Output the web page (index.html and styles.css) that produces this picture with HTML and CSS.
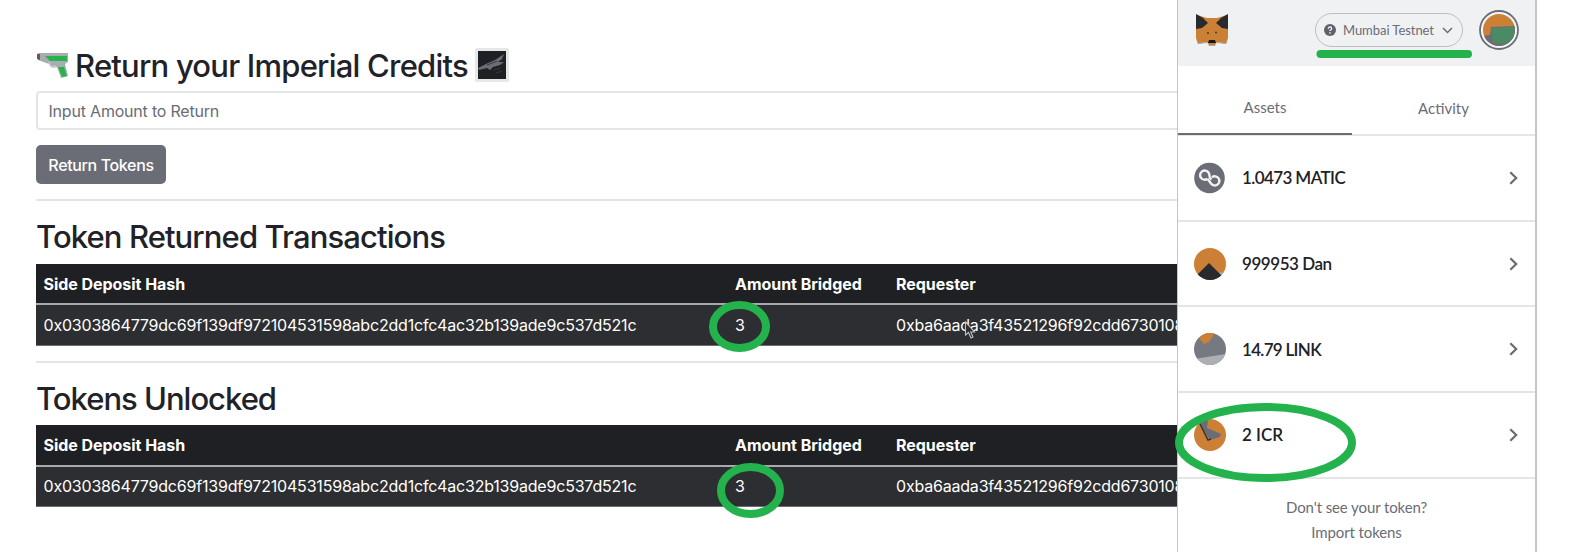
FILE: index.html
```html
<!DOCTYPE html>
<html lang="en">
<head>
<meta charset="utf-8">
<title>Imperial Credits Bridge</title>
<link rel="stylesheet" href="styles.css">
</head>
<body>
<div class="screen">
  <main class="bridge">
    <h2 class="title">
      <svg class="pistol" viewBox="0 0 33 27"><path d="M1 2 3 1H32V10L29 12 32 24 25 26 21 15Q16 17 13 12L2 8Z" fill="#a9adb1"/><path d="M9 4H31V9H14ZM22 15H28L31 24 26 25Z" fill="#27b24c"/><path d="M13 10Q14 17 20 14" fill="none" stroke="#c9ccd0" stroke-width="1.5"/><path d="M1 2H4V8L1 7Z" fill="#6b5a50"/></svg>
      <span class="title-text">Return your Imperial Credits</span>
      <svg class="ship" viewBox="0 0 34 34"><rect width="34" height="34" rx="2" fill="#e6e7e9"/><rect x="3" y="3" width="28" height="28" fill="#1f2024"/><path d="M3 20 13 15 20 12 29 6 27 11 23 14 29 14 25 17 18 19 15 22 12 20 4 22Z" fill="#6a6c76"/><path d="M19 22 25 20M12 17 22 13M21 25 27 23" stroke="#36373c" stroke-width="1"/></svg>
    </h2>
    <input class="amount" placeholder="Input Amount to Return">
    <button class="return">Return Tokens</button>
    <hr class="rule">
    <h2 class="heading returned">Token Returned Transactions</h2>
    <table class="ledger first">
      <thead><tr><th class="c-hash">Side Deposit Hash</th><th class="c-amount">Amount Bridged</th><th>Requester</th></tr></thead>
      <tbody><tr><td>0x0303864779dc69f139df972104531598abc2dd1cfc4ac32b139ade9c537d521c</td><td>3</td><td>0xba6aada3f43521296f92cdd6730108</td></tr></tbody>
    </table>
    <hr class="rule">
    <h2 class="heading unlocked">Tokens Unlocked</h2>
    <table class="ledger">
      <thead><tr><th class="c-hash">Side Deposit Hash</th><th class="c-amount">Amount Bridged</th><th>Requester</th></tr></thead>
      <tbody><tr><td>0x0303864779dc69f139df972104531598abc2dd1cfc4ac32b139ade9c537d521c</td><td>3</td><td>0xba6aada3f43521296f92cdd6730108</td></tr></tbody>
    </table>
  </main>

  <aside class="wallet">
    <header class="wallet-head">
      <svg class="fox" viewBox="0 0 34 32"><path d="M2 1 12 4H22L32 1 33 10V24L31 30 22 28 20 31H14L12 28 3 30 1 24V10Z" fill="#cb8036"/><path d="M1 0 8 4 13 9 7 14 1 15ZM33 0 26 4 21 9 27 14 33 15Z" fill="#292a2e"/><path d="M1 25 3 29 12 28 13 31H21L22 28 31 29 33 25 31 30 22 29 20 32H14L12 29 3 30Z" fill="#a7a9ad"/><path d="M14 26H20L21 29H13Z" fill="#17181b"/><circle cx="13" cy="19" r=".9" fill="#333"/><circle cx="21" cy="18.500" r=".9" fill="#333"/></svg>
      <div class="network">
        <svg class="help" viewBox="0 0 12 12"><circle cx="6" cy="6" r="6" fill="#5f616b"/><path d="M4.300 4.700Q4.300 3 6 3T7.700 4.700Q7.700 5.500 6 6.300V7" fill="none" stroke="#f0f1f2" stroke-width="1.300"/><circle cx="6" cy="8.900" r=".8" fill="#f0f1f2"/></svg>
        <span class="network-name">Mumbai Testnet</span>
        <svg class="down" viewBox="0 0 11 7"><path d="M1 1 5.500 5.500 10 1" fill="none" stroke="#6a6c76" stroke-width="1.500"/></svg>
      </div>
      <svg class="avatar" viewBox="0 0 40 40"><circle cx="20" cy="20" r="19" fill="#f5f6f7" stroke="#6a6c76" stroke-width="1.800"/><clipPath id="av"><circle cx="20" cy="20" r="16"/></clipPath><g clip-path="url(#av)"><path d="M0 0H40V40H0Z" fill="#cb8036"/><path d="M0 26 11 25 12 17 36 16V40H0Z" fill="#6a6c76"/><path d="M12 18 35 17V28L29 34 14 33Z" fill="#4a8a64"/></g></svg>
    </header>
    <nav class="tabs"><span class="tab active">Assets</span><span class="tab">Activity</span></nav>
    <div class="asset">
      <svg class="coin" viewBox="0 0 32 32"><circle cx="15.500" cy="16" r="15.300" fill="#6a6c76"/><g fill="none" stroke="#f3f3f4" stroke-width="2.400"><path d="M13.500 16.800A4.600 4.600 0 1 1 14.500 10.500Q15.500 12 15.500 14T17.500 17.500"/><path d="M18 15.200A4.600 4.600 0 1 1 17 21.500Q15.500 19.500 13.500 16.800"/></g></svg>
      <span class="balance b1">1.0473 MATIC</span><svg class="next" viewBox="0 0 9 14"><path d="M1.300 1.300 7.200 7 1.300 12.700" fill="none" stroke="#686a74" stroke-width="2.200"/></svg>
    </div>
    <div class="asset">
      <svg class="coin" viewBox="0 0 32 32"><clipPath id="c"><circle cx="16" cy="16" r="16"/></clipPath><g clip-path="url(#c)"><path d="M0 0H32V32H0Z" fill="#cb8036"/><path d="M0 27 5 25 3 32H0ZM25 25 32 23V32H22Z" fill="#a7a9ad"/><path d="M3 27 15 15 28 28 23 32H6Z" fill="#292a2e"/></g></svg>
      <span class="balance b2">999953 Dan</span><svg class="next" viewBox="0 0 9 14"><path d="M1.300 1.300 7.200 7 1.300 12.700" fill="none" stroke="#686a74" stroke-width="2.200"/></svg>
    </div>
    <div class="asset">
      <svg class="coin" viewBox="0 0 32 32"><g clip-path="url(#c)"><path d="M0 0H32V32H0Z" fill="#777982"/><path d="M0 26 32 21V32H0Z" fill="#adb0b3"/><path d="M5 5 11 0H21L15 9 10 11Z" fill="#cb8036"/></g></svg>
      <span class="balance b3">14.79 LINK</span><svg class="next" viewBox="0 0 9 14"><path d="M1.300 1.300 7.200 7 1.300 12.700" fill="none" stroke="#686a74" stroke-width="2.200"/></svg>
    </div>
    <div class="asset">
      <svg class="coin" viewBox="0 0 32 32"><g clip-path="url(#c)"><path d="M0 0H32V32H0Z" fill="#cb8036"/><path d="M4 3 14 0 13 9 27 15 26 18 16 21Z" fill="#6a6c76"/><path d="M6 5 14 21 17 20" fill="none" stroke="#34353a" stroke-width="1.500"/></g></svg>
      <span class="balance">2 ICR</span><svg class="next" viewBox="0 0 9 14"><path d="M1.300 1.300 7.200 7 1.300 12.700" fill="none" stroke="#686a74" stroke-width="2.200"/></svg>
    </div>
    <footer class="wallet-foot"><span>Don't see your token?</span><span>Import tokens</span></footer>
  </aside>

  <svg class="marks" viewBox="0 0 1587 552" fill="none" stroke="#24b24c" stroke-width="8">
    <ellipse cx="739.500" cy="326.500" rx="26.500" ry="21.500"/>
    <ellipse cx="750.500" cy="490.500" rx="29.500" ry="23.500"/>
    <ellipse cx="1265.500" cy="442.500" rx="86.500" ry="35.500"/>
    <path d="M1320.500 54H1468" stroke-linecap="round"/>
    <path d="M965.500 322V335L968.500 332.500 971 338 973 337 970.800 332H974.500Z" fill="#2d2e32" stroke="#bfc0c4" stroke-width="1.100"/>
  </svg>
</div>
</body>
</html>
```
FILE: styles.css
```css
* { box-sizing: border-box; }
body { margin: 0; background: #fff; color: #212227; font-family: Inter, "Liberation Sans", sans-serif; }
h2 { margin: 0; font-weight: 500; }
.screen { position: relative; display: flex; width: 1587px; height: 552px; overflow: hidden; }

.bridge { width: 1177px; padding: 46px 0 0 36px; overflow: hidden; }
.title { display: flex; align-items: center; height: 38px; font-size: 31px; line-height: 38px; white-space: nowrap; }
.pistol { width: 33px; height: 27px; margin-right: 6px; }
.title-text { width: 394px; padding-top: 1px; letter-spacing: -.78px; }
.ship { width: 34px; height: 34px; margin-left: 6px; }
.amount { display: block; width: 1180px; height: 39px; margin: 7px 0 0; padding: 0 10px 0 10.500px; border: 2px solid #e4e5e7; border-radius: 4px; font: 400 16px Inter, sans-serif; letter-spacing: -.2px; outline: 0; }
.amount::placeholder { color: #6a6c76; opacity: 1; }
.return { display: block; width: 130px; height: 39px; margin: 15px 0 0; padding: 0; border: 0; border-radius: 5px; background: #6a6c76; color: #fff; font: 500 16px Inter, sans-serif; letter-spacing: -.36px; }
.rule { height: 2px; margin: 15px 0 0; border: 0; background: #e4e5e7; }
.heading { height: 38px; margin: 17px 0 8px; font-size: 31px; line-height: 38px; white-space: nowrap; letter-spacing: -.9px; }
.unlocked { margin: 17px 0 7px; letter-spacing: -1px; }
.ledger { width: 1300px; border-collapse: collapse; table-layout: fixed; background: #1f2024; color: #fff; font-size: 16px; white-space: nowrap; }
.ledger th, .ledger td { height: 41px; padding: 0 8px 0 7.500px; text-align: left; line-height: 24px; }
.ledger th { font-weight: 650; letter-spacing: -.04px; border-bottom: 2px solid #a7a9ad; }
.ledger td { background: #2d2e32; border-bottom: 1px solid #6a6c76; letter-spacing: -.2px; }
.ledger.first th { height: 40px; }
.c-hash { width: 691.500px; }
.c-amount { width: 161px; }

.wallet { display: flex; flex-direction: column; width: 360px; border: solid #c3c5c9; border-width: 0 2px 0 1px; background: #fff; font-family: Lato, sans-serif; }
.wallet-head { display: flex; align-items: center; height: 66px; padding: 0 15px 6px 17px; background: #f0f1f2; }
.fox { width: 34px; height: 32px; }
.network { display: flex; align-items: center; width: 148px; height: 34px; margin-left: 86px; padding: 0 9px 0 8px; border: 1px solid #bcbec2; border-radius: 17px; color: #6a6c76; font-size: 13px; }
.help { width: 12px; height: 12px; margin-right: 7px; }
.network-name { flex: 1; white-space: nowrap; letter-spacing: -.05px; }
.down { width: 11px; height: 7px; }
.avatar { width: 40px; height: 40px; margin-left: 16px; }
.tabs { display: flex; height: 70px; border-bottom: 2px solid #e4e5e7; color: #6a6c76; font-size: 15px; }
.tab { display: flex; align-items: center; justify-content: center; width: 183px; padding-top: 14px; margin-bottom: -1px; }
.tab.active { width: 174px; padding-top: 15px; border-bottom: 2px solid #6a6c76; }
.asset { display: flex; align-items: center; height: 85.700px; padding: 0 17px 0 16px; border-bottom: 2px solid #e4e5e7; font-size: 17px; font-weight: 600; }
.coin { width: 32px; height: 32px; margin-right: 16px; }
.balance { flex: 1; white-space: nowrap; }
.b1 { letter-spacing: -.6px; }
.b2 { letter-spacing: -.45px; }
.b3 { letter-spacing: -.7px; }
.next { width: 9px; height: 14px; }
.wallet-foot { display: flex; flex-direction: column; align-items: center; padding-top: 16px; color: #6a6c76; font-size: 15px; line-height: 25px; letter-spacing: -.1px; }
.marks { position: absolute; left: 0; top: 0; width: 1587px; height: 552px; }
```
